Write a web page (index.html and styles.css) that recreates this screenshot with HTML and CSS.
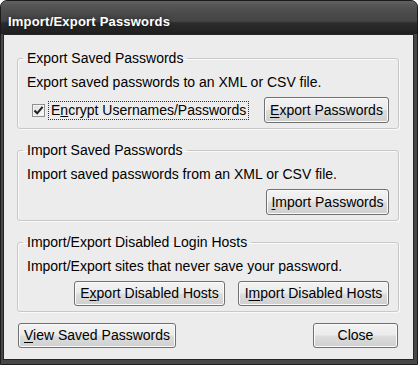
FILE: index.html
```html
<!DOCTYPE html>
<html lang="en">
<head>
  <meta charset="UTF-8" />
  <meta name="viewport" content="width=device-width, initial-scale=1.0">
  <title>Import/Export Passwords</title>
  <link rel="stylesheet" href="styles.css">
</head>
<body>
  <div class="window">
    <div class="titlebar">Import/Export Passwords</div>
    <div class="client">

      <fieldset class="group">
        <legend>Export Saved Passwords</legend>
        <p class="desc">Export saved passwords to an XML or CSV file.</p>
        <div class="row">
          <label class="check">
            <span class="box">
              <svg width="11" height="11" viewBox="0 0 11 11"><path d="M1.5 5.5 L4.2 8.3 L9.6 1.8" fill="none" stroke="#222" stroke-width="2.1"/></svg>
            </span>
            <span class="focus">E<u>n</u>crypt Usernames/Passwords</span>
          </label>
          <button class="btn btn-export"><u>E</u>xport Passwords</button>
        </div>
      </fieldset>

      <fieldset class="group">
        <legend>Import Saved Passwords</legend>
        <p class="desc">Import saved passwords from an XML or CSV file.</p>
        <div class="row end">
          <button class="btn btn-import"><u>I</u>mport Passwords</button>
        </div>
      </fieldset>

      <fieldset class="group">
        <legend>Import/Export Disabled Login Hosts</legend>
        <p class="desc">Import/Export sites that never save your password.</p>
        <div class="row end hosts">
          <button class="btn">E<u>x</u>port Disabled Hosts</button>
          <button class="btn">I<u>m</u>port Disabled Hosts</button>
        </div>
      </fieldset>

      <div class="footer">
        <button class="btn btn-view"><u>V</u>iew Saved Passwords</button>
        <button class="btn btn-close">Close</button>
      </div>

    </div>
  </div>
</body>
</html>
```

FILE: styles.css
```css
html, body {
  margin: 0;
  padding: 0;
  background: #ffffff;
}
body {
  font-family: "Liberation Sans", Arial, sans-serif;
  font-size: 14px;
  color: #000;
}
.window {
  width: 418px;
  height: 365px;
  box-sizing: border-box;
  border: 1px solid #1c1c1c;
  border-radius: 7px 7px 0 0;
  background: #474747;
  padding: 0 3px 4px 2px;
  overflow: hidden;
}
.titlebar {
  height: 33px;
  margin: 0 -3px 0 -2px;
  padding-left: 7px;
  box-sizing: border-box;
  background: linear-gradient(#626262 0px, #565656 4px, #4b4b4b 12px, #454545 20px, #2c2c2c 22px, #232323 30px, #1e1e1e 33px);
  color: #fff;
  font-weight: bold;
  font-size: 13px;
  letter-spacing: 0.2px;
  line-height: 15px;
  padding-top: 13px;
  text-shadow: 0 0 4px rgba(0, 0, 0, 0.6);
}
.client {
  border: 1px solid #262626;
  background: #ececec;
  padding: 16px 14px 0 13px;
  height: 308px;
}
.group {
  margin: 0 0 14px;
  padding: 0 9px 5px;
  border: 1px solid #c8c8c8;
  border-radius: 3px;
  box-shadow: inset 1px 1px 0 #fafafa, 1px 1px 0 #fafafa;
  min-width: 0;
}
.group legend {
  line-height: 15px;
  padding: 0 4px;
  margin-left: -4px;
}
.desc {
  margin: 9px 0 0;
  line-height: 15px;
}
.row {
  display: flex;
  align-items: center;
  justify-content: space-between;
  margin-top: 7px;
}
.row.end {
  justify-content: flex-end;
}
.hosts {
  gap: 13px;
}
.check {
  display: flex;
  align-items: center;
  margin-left: 5px;
}
.box {
  width: 11px;
  height: 11px;
  border: 1px solid #8e8f8f;
  background: linear-gradient(135deg, #dcdcdc, #fdfdfd);
  box-shadow: inset 0 0 0 1px #f4f4f4;
  display: flex;
  align-items: center;
  justify-content: center;
  margin-right: 3px;
}
.box svg {
  display: block;
}
.focus {
  border: 1px dotted #333;
  padding: 1px 2px;
  line-height: 15px;
}
.btn {
  font-family: inherit;
  font-size: 14px;
  color: #000;
  height: 26px;
  padding: 0 4px;
  white-space: nowrap;
  border: 1px solid #707070;
  border-radius: 3px;
  background: linear-gradient(#f3f3f3 0%, #ebebeb 48%, #dddddd 52%, #cfcfcf 100%);
  box-shadow: inset 0 0 0 1px #fbfbfb;
  cursor: pointer;
  line-height: 15px;
}
.btn u {
  text-underline-offset: 2px;
}
.btn-export {
  width: 125px;
}
.btn-import {
  width: 123px;
}
.hosts .btn {
  width: 151px;
  height: 25px;
}
.footer {
  display: flex;
  justify-content: space-between;
  margin-top: -3px;
  padding: 0 1px;
}
.btn-view {
  width: 158px;
  height: 25px;
}
.btn-close {
  width: 85px;
  height: 25px;
}
```
